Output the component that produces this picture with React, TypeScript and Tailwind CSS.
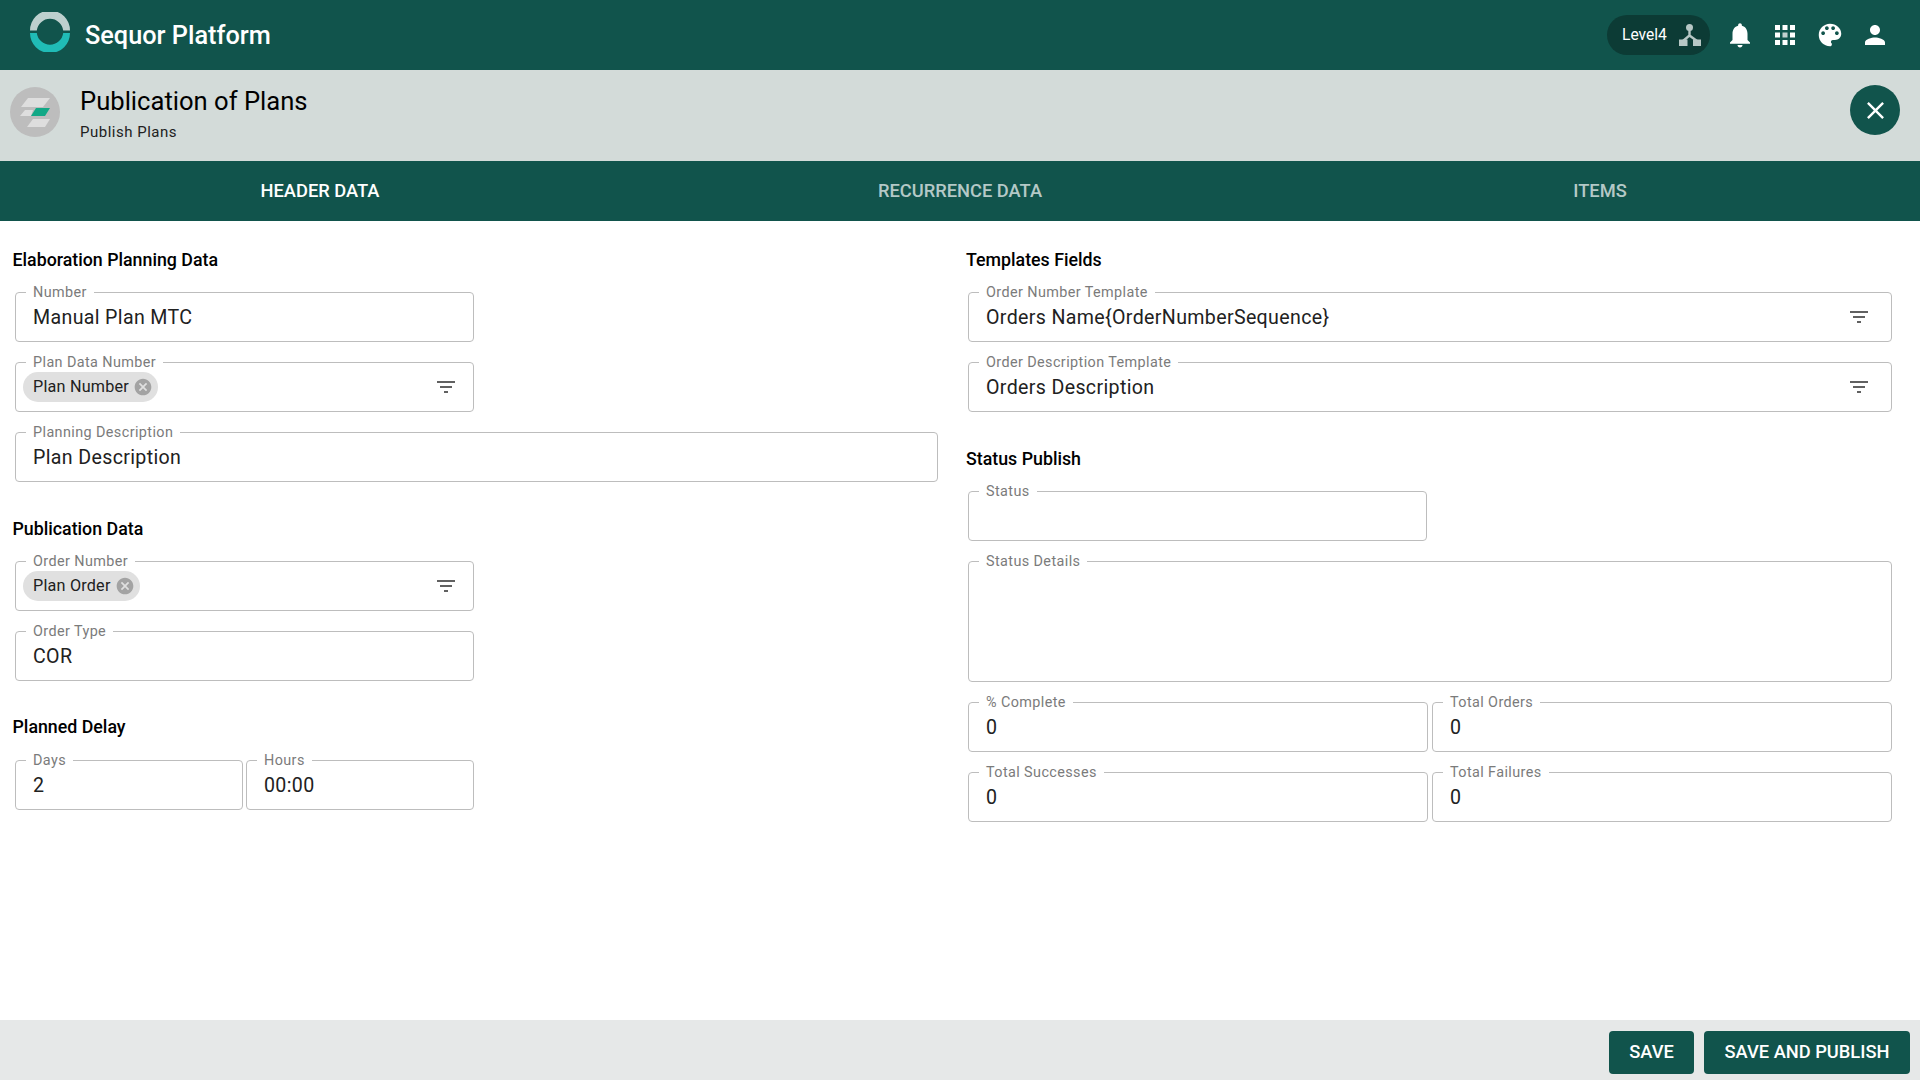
import React from "react";

const ICONS = {
  bell: "M12 22c1.1 0 2-.9 2-2h-4c0 1.1.89 2 2 2zm6-6v-5c0-3.07-1.64-5.64-4.5-6.32V4c0-.83-.67-1.5-1.5-1.5s-1.5.67-1.5 1.5v.68C7.63 5.36 6 7.92 6 11v5l-2 2v1h16v-1l-2-2z",
  apps: "M4 8h4V4H4v4zm6 12h4v-4h-4v4zm-6 0h4v-4H4v4zm0-6h4v-4H4v4zm12-10v4h4V4h-4zm-6 4h4V4h-4v4zm6 6h4v-4h-4v4zm0 6h4v-4h-4v4z",
  palette:
    "M12 3c-4.97 0-9 4.03-9 9s4.03 9 9 9c.83 0 1.5-.67 1.5-1.5 0-.39-.15-.74-.39-1.01-.23-.26-.38-.61-.38-.99 0-.83.67-1.5 1.5-1.5H16c2.76 0 5-2.24 5-5 0-4.42-4.03-8-9-8zm-5.5 9c-.83 0-1.5-.67-1.5-1.5S5.67 9 6.5 9 8 9.67 8 10.5 7.33 12 6.5 12zm3-4C8.67 8 8 7.33 8 6.5S8.67 5 9.5 5s1.5.67 1.5 1.5S10.33 8 9.5 8zm5 0c-.83 0-1.5-.67-1.5-1.5S13.67 5 14.5 5s1.5.67 1.5 1.5S15.33 8 14.5 8zm3 4c-.83 0-1.5-.67-1.5-1.5S16.67 9 17.5 9s1.5.67 1.5 1.5-.67 1.5-1.5 1.5z",
  person: "M12 12c2.21 0 4-1.79 4-4s-1.79-4-4-4-4 1.79-4 4 1.79 4 4 4zm0 2c-2.67 0-8 1.34-8 4v2h16v-2c0-2.66-5.33-4-8-4z",
  close: "M19 6.41L17.59 5 12 10.59 6.41 5 5 6.41 10.59 12 5 17.59 6.41 19 12 13.41 17.59 19 19 17.59 13.41 12z",
  cancel:
    "M12 2C6.47 2 2 6.47 2 12s4.47 10 10 10 10-4.47 10-10S17.53 2 12 2zm5 13.59L15.59 17 12 13.41 8.41 17 7 15.59 10.59 12 7 8.41 8.41 7 12 10.59 15.59 7 17 8.41 13.41 12 17 15.59z",
  filter: "M10 18h4v-2h-4v2zM3 6v2h18V6H3zm3 7h12v-2H6v2z",
};

const Icon = ({ d, className }: { d: string; className: string }) => (
  <svg viewBox="0 0 24 24" fill="currentColor" className={className}>
    <path d={d} />
  </svg>
);

interface FieldProps {
  label: string;
  value?: string;
  chip?: string;
  filter?: boolean;
  wideFilter?: boolean;
  className?: string;
}

const Field: React.FC<FieldProps> = ({ label, value, chip, filter, wideFilter, className = "h-[58px]" }) => (
  <fieldset
    className={`${className} min-w-0 rounded-[4px] border border-[#bdbdbd] ${wideFilter ? "pr-[20px]" : "pr-[15px]"} ${chip ? "pl-[7px]" : "pl-[17px]"}`}
  >
    <legend className={`${chip ? "ml-[3px]" : "ml-[-7px]"} px-[7px] pt-[1px] text-[14.4px] leading-[15px] tracking-[0.4px] text-[#7b7b7b]`}>
      {label}
    </legend>
    <div className="flex h-[34px] items-center justify-between pt-[2px] text-[19.6px] tracking-[0.35px] text-[#212121]">
      {chip ? (
        <span className="mt-[-2px] flex h-[30px] items-center rounded-full bg-[#e0e0e0] pl-[10px] pr-[5px] text-[16.2px] tracking-[0.2px]">
          {chip}
          <Icon d={ICONS.cancel} className="ml-[4.5px] h-[20px] w-[20px] text-[#a3a3a3]" />
        </span>
      ) : (
        <span>{value}</span>
      )}
      {filter && <Icon d={ICONS.filter} className="mt-[-2px] h-[24px] w-[24px] shrink-0 text-[#616161]" />}
    </div>
  </fieldset>
);

const SectionTitle = ({ children, className = "" }: { children: string; className?: string }) => (
  <h3 className={`${className} text-[17.8px] font-medium leading-[24px] text-black`}>{children}</h3>
);

export default function App() {
  return (
    <div className="flex h-screen flex-col overflow-hidden bg-white font-['Roboto',sans-serif]">
      <header className="flex h-[70px] shrink-0 items-center bg-[#11544c] pl-[30px] pr-[30px] text-white">
        <svg viewBox="0 0 40 40" className="mt-[-6px] h-[40px] w-[40px]">
          <path d="M0 18.5A20 20 0 0 1 40 18.5H33.2A13.3 13.3 0 0 0 6.8 18.5Z" fill="#bdd0ce" />
          <path d="M0 21A20 20 0 0 0 40 21H33.2A13.3 13.3 0 0 1 6.8 21Z" fill="#20bcb6" />
        </svg>
        <span className="ml-[15px] mt-[2px] text-[25.3px] font-medium">Sequor Platform</span>
        <div className="ml-auto flex items-center gap-[15px]">
          <div className="flex h-[40px] w-[103px] items-center rounded-full bg-[#0c3b35] pl-[15px]">
            <span className="mt-[2px] text-[15.6px]">Level4</span>
            <svg viewBox="0 0 22 22" className="ml-[12px] h-[22px] w-[22px]">
              <circle cx="10.5" cy="3.5" r="3.5" fill="#b7c7c5" />
              <path d="M10.5 5V11.5L4 17M10.5 11.5L18 17" stroke="#b7c7c5" strokeWidth="2.4" fill="none" />
              <rect x="0" y="15.5" width="8.5" height="6.5" fill="#b7c7c5" />
              <rect x="14" y="15.5" width="8" height="6.5" fill="#b7c7c5" />
            </svg>
          </div>
          <Icon d={ICONS.bell} className="h-[30px] w-[30px]" />
          <svg viewBox="0 0 24 24" fill="currentColor" className="h-[30px] w-[30px]">
            <path d={ICONS.apps} />
            <rect x="10" y="10" width="4" height="4" fill="#c3d1cf" />
          </svg>
          <Icon d={ICONS.palette} className="h-[30px] w-[30px]" />
          <Icon d={ICONS.person} className="h-[30px] w-[30px]" />
        </div>
      </header>

      <section className="flex h-[91px] shrink-0 items-start bg-[#d3dbd9] pl-[10px] pr-[20px] pt-[17px]">
        <svg viewBox="0 0 50 50" className="h-[50px] w-[50px]">
          <circle cx="25" cy="25" r="25" fill="#bdbdbd" />
          <path d="M18 11H40L33 20H11Z M10 29L15 23H23L21 29Z M17 40L23 32H40L35 40Z" fill="#dedede" />
          <path d="M21 29L26 21H40L35 29Z" fill="#12a886" />
        </svg>
        <div className="ml-[20px] mt-[-2px] flex flex-col">
          <h1 className="text-[25.6px] font-normal leading-[32px] text-black">Publication of Plans</h1>
          <p className="mt-[6px] text-[15px] leading-[18px] tracking-[0.5px] text-[#212121]">Publish Plans</p>
        </div>
        <button className="ml-auto mt-[-2px] flex h-[50px] w-[50px] items-center justify-center rounded-full bg-[#11544c] text-white">
          <Icon d={ICONS.close} className="h-[29px] w-[29px]" />
        </button>
      </section>

      <nav className="grid h-[60px] shrink-0 grid-cols-3 bg-[#11544c] text-[18.3px] font-medium">
        <div className="flex items-center justify-center text-white">HEADER DATA</div>
        <div className="flex items-center justify-center text-white/70">RECURRENCE DATA</div>
        <div className="flex items-center justify-center text-white/70">ITEMS</div>
      </nav>

      <main className="flex min-h-0 flex-1 pl-[12.5px] pt-[27px]">
        <div className="flex w-[925.5px] shrink-0 flex-col">
          <SectionTitle>Elaboration Planning Data</SectionTitle>
          <div className="ml-[2.5px] mt-[12px] flex flex-col gap-[12px]">
            <Field label="Number" value="Manual Plan MTC" className="h-[58px] w-[459px]" />
            <Field label="Plan Data Number" chip="Plan Number" filter className="h-[58px] w-[459px]" />
            <Field label="Planning Description" value="Plan Description" />
          </div>
          <SectionTitle className="mt-[35px]">Publication Data</SectionTitle>
          <div className="ml-[2.5px] mt-[12px] flex w-[459px] flex-col gap-[12px]">
            <Field label="Order Number" chip="Plan Order" filter />
            <Field label="Order Type" value="COR" />
          </div>
          <SectionTitle className="mt-[34px]">Planned Delay</SectionTitle>
          <div className="ml-[2.5px] mt-[13px] grid w-[459px] grid-cols-2 gap-[3px]">
            <Field label="Days" value="2" />
            <Field label="Hours" value="00:00" />
          </div>
        </div>

        <div className="ml-[28px] flex w-[926px] shrink-0 flex-col">
          <SectionTitle>Templates Fields</SectionTitle>
          <div className="ml-[2px] mt-[12px] flex flex-col gap-[12px]">
            <Field label="Order Number Template" value="Orders Name{OrderNumberSequence}" filter wideFilter />
            <Field label="Order Description Template" value="Orders Description" filter wideFilter />
          </div>
          <SectionTitle className="mt-[35px]">Status Publish</SectionTitle>
          <div className="ml-[2px] mt-[12px] flex flex-col gap-[12px]">
            <Field label="Status" className="h-[58px] w-[459px]" />
            <Field label="Status Details" className="h-[129px]" />
            <div className="grid grid-cols-2 gap-[4px]">
              <Field label="% Complete" value="0" />
              <Field label="Total Orders" value="0" />
            </div>
            <div className="grid grid-cols-2 gap-[4px]">
              <Field label="Total Successes" value="0" />
              <Field label="Total Failures" value="0" />
            </div>
          </div>
        </div>
      </main>

      <footer className="flex h-[60px] shrink-0 items-start justify-end gap-[10px] bg-[#e6e8e8] pr-[10px] pt-[11px]">
        <button className="h-[43px] w-[85px] rounded-[4px] bg-[#11544c] pb-[2px] text-[18.3px] font-medium text-white">SAVE</button>
        <button className="h-[43px] w-[206px] rounded-[4px] bg-[#11544c] pb-[2px] text-[18.3px] font-medium text-white">SAVE AND PUBLISH</button>
      </footer>
    </div>
  );
}
